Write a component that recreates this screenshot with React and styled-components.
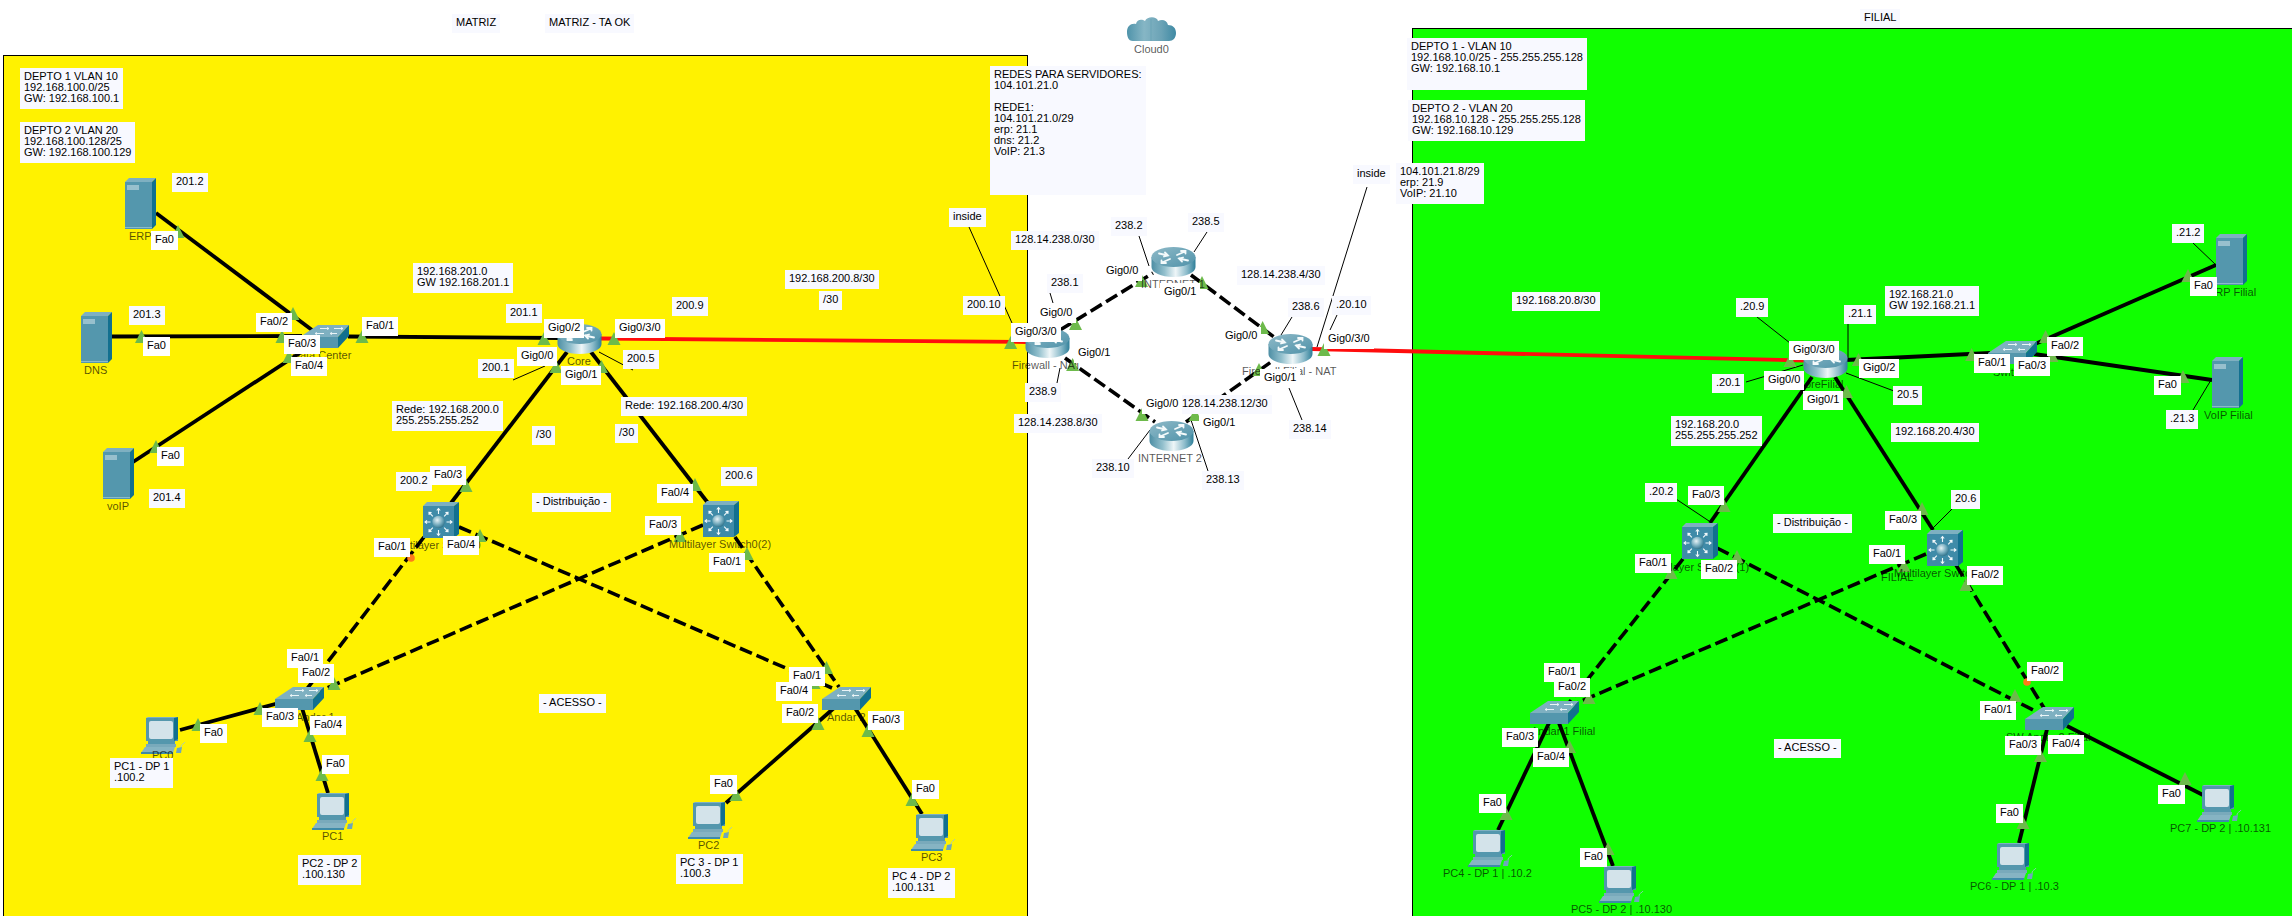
import React from "react";
import styled, { createGlobalStyle } from "styled-components";

const Global = createGlobalStyle`
  html, body { margin: 0; padding: 0; background: #fff; }
  body { overflow: hidden; }
`;

const Canvas = styled.div`
  position: relative;
  width: 2292px;
  height: 916px;
  overflow: hidden;
  background: #fff;
  font-family: "Liberation Sans", Arial, sans-serif;
  font-size: 11px;
  line-height: 11px;
`;

const Site = styled.div`
  position: absolute;
  left: ${(p) => p.$left}px;
  top: ${(p) => p.$top}px;
  width: ${(p) => p.$width}px;
  bottom: -4px;
  box-sizing: border-box;
  background: ${(p) => p.$color};
  border: 1px solid #000;
`;

const WireLayer = styled.svg`
  position: absolute;
  left: 0;
  top: 0;
  width: 2292px;
  height: 916px;
`;

const DeviceBox = styled.svg`
  position: absolute;
  left: ${(p) => p.$x}px;
  top: ${(p) => p.$y}px;
  overflow: visible;
`;

const DeviceName = styled.span`
  position: absolute;
  left: ${(p) => p.$x}px;
  top: ${(p) => p.$cy - 6}px;
  white-space: pre;
  color: rgba(0, 0, 0, 0.68);
`;

const Tag = styled.div`
  position: absolute;
  left: ${(p) => p.$x}px;
  top: ${(p) => p.$y}px;
  padding: 3px 4px 5px;
  min-height: ${(p) => p.$h || 0}px;
  box-sizing: ${(p) => (p.$h ? "border-box" : "content-box")};
  min-width: ${(p) => p.$w || 0}px;
  white-space: pre;
  color: #000;
  background: ${(p) => (p.$note ? "#f8f9ff" : "#fff")};
`;

const TEAL = "#5497ad";
const TEAL_TOP = "#7eb0c1";
const TEAL_SIDE = "#12708f";

const Shared = () => (
  <svg width="0" height="0" style={{ position: "absolute" }}>
    <defs>
      <linearGradient id="rbody" x1="0" x2="1" y1="0" y2="0">
        <stop offset="0" stopColor="#4d8ea4" />
        <stop offset="0.3" stopColor="#93c0cd" />
        <stop offset="0.55" stopColor="#eef6f8" />
        <stop offset="0.8" stopColor="#8dbccb" />
        <stop offset="1" stopColor="#2f7f99" />
      </linearGradient>
      <linearGradient id="rtop" x1="0" x2="1" y1="0" y2="1">
        <stop offset="0" stopColor="#8fbac8" />
        <stop offset="1" stopColor="#4f92a9" />
      </linearGradient>
      <radialGradient id="ball" cx="0.4" cy="0.35" r="0.7">
        <stop offset="0" stopColor="#e6f2f5" />
        <stop offset="0.6" stopColor="#6ea7ba" />
        <stop offset="1" stopColor="#2a6d85" />
      </radialGradient>
      <linearGradient id="cloud" x1="0" x2="1" y1="0" y2="0">
        <stop offset="0" stopColor="#4f93aa" />
        <stop offset="0.35" stopColor="#86b6c5" />
        <stop offset="0.7" stopColor="#6ba3b6" />
        <stop offset="1" stopColor="#3f8aa4" />
      </linearGradient>
    </defs>
  </svg>
);

const Server = ({ x, y }) => (
  <DeviceBox $x={x} $y={y} width="31" height="51" viewBox="0 0 31 51">
    <polygon points="0,4 27,4 27,51 0,51" fill={TEAL} />
    <polygon points="0,4 4,0 31,0 27,4" fill={TEAL_TOP} />
    <polygon points="27,4 31,0 31,47 27,51" fill={TEAL_SIDE} />
    <rect x="2" y="7" width="12" height="5" fill="#97c0cd" />
    <rect x="0" y="49" width="27" height="1" fill="#8cbac9" />
  </DeviceBox>
);

const Switch = ({ x, y }) => (
  <DeviceBox $x={x} $y={y} width="49" height="23" viewBox="0 0 49 23">
    <polygon points="18,0 49,0 38,12 0,12" fill={TEAL_TOP} />
    <polygon points="0,12 38,12 38,23 0,23" fill={TEAL} />
    <polygon points="38,12 49,0 49,11 38,23" fill={TEAL_SIDE} />
    <g stroke="#eaf4f7" strokeWidth="1" fill="none">
      <path d="M20 3.5h9M27 2.5l2 1-2 1" />
      <path d="M34 3.5h9M41 2.5l2 1-2 1" />
      <path d="M15 8.5h9M17 7.5l-2 1 2 1" />
      <path d="M30 8.5h7M32 7.5l-2 1 2 1" />
    </g>
  </DeviceBox>
);

const Router = ({ x, y }) => (
  <DeviceBox $x={x} $y={y} width="45" height="30" viewBox="0 0 45 30">
    <path d="M0.5 10V20C0.5 25.5 10 30 22.5 30S44.5 25.5 44.5 20V10Z" fill="url(#rbody)" />
    <ellipse cx="22.5" cy="10" rx="22" ry="10" fill="url(#rtop)" />
    <g stroke="#f4fafb" strokeWidth="1.8" fill="none" strokeLinecap="round">
      <path d="M8 6.5l9 2M14 5.5l3 3-4 1" />
      <path d="M37 13.5l-9-2M31 14.5l-3-3 4-1" />
      <path d="M26 8l8-3.5M30 4h4.5v2.5" />
      <path d="M19 12l-8 3.5M15 16h-4.5v-2.5" />
    </g>
  </DeviceBox>
);

const MLSwitch = ({ x, y }) => {
  const rays = [0, 45, 90, 135, 180, 225, 270, 315];
  return (
    <DeviceBox $x={x} $y={y} width="36" height="36" viewBox="0 0 36 36">
      <polygon points="0,4 31,4 31,36 0,36" fill="#3f8ba8" />
      <polygon points="0,4 4,0 36,0 31,4" fill={TEAL_TOP} />
      <polygon points="31,4 36,0 36,32 31,36" fill={TEAL_SIDE} />
      <g transform="translate(15.5 20)">
        {rays.map((r) => (
          <g key={r} transform={`rotate(${r})`} stroke="#f2f9fb" strokeWidth="1.1" fill="none">
            <path d="M8 0H13.5M11.5 -1.7L13.5 0L11.5 1.7" />
          </g>
        ))}
        <circle r="6.2" fill="url(#ball)" />
      </g>
    </DeviceBox>
  );
};

const PC = ({ x, y }) => (
  <DeviceBox $x={x} $y={y} width="44" height="37" viewBox="0 0 44 37">
    <polygon points="5,1 37,1 37,24 5,24" fill={TEAL} />
    <polygon points="5,1 7,0 37,0 35,1" fill={TEAL_TOP} />
    <polygon points="33,1 37,0 37,22 33,24" fill={TEAL_SIDE} />
    <rect x="8" y="4" width="24" height="18" rx="2" fill="#d3e3ea" />
    <rect x="7" y="24" width="27" height="3" fill={TEAL} />
    <rect x="5" y="27" width="30" height="3" fill="#79aabb" />
    <polygon points="4,30 34,30 32,36 0,36" fill="#86b4c3" />
    <rect x="0" y="35" width="32" height="2" fill="#3f8ba8" />
    <polygon points="36,31 41,30 40,36 35,36" fill="#6ea7ba" />
    <path d="M40 30c0-3 3-3 4-5" stroke="#9cc4d0" strokeWidth="0.8" fill="none" />
  </DeviceBox>
);

const Cloud = ({ x, y }) => (
  <DeviceBox $x={x} $y={y} width="49" height="26" viewBox="0 0 49 26">
    <path
      d="M6 25C1 25 0 20 0 16C0 10 4 7 9 8C10 3 15 3 18 5C20 0 30 0 31 5C35 3 40 4 41 9C46 9 49 12 49 17C49 22 46 25 42 25Z"
      fill="url(#cloud)"
    />
    <path d="M24 3V25" stroke="#5c9bb0" strokeWidth="1" opacity="0.5" />
  </DeviceBox>
);

/* links: [x1,y1,x2,y2] */
const solid = [
  [156, 213, 312, 330], [112, 336.5, 302, 336], [133, 462, 312, 345], [348, 336.5, 560, 338],
  [567, 352, 451, 503], [591, 352, 708, 503],
  [180, 730, 290, 700], [302, 708, 328, 793], [834, 708, 726, 803], [855, 708, 922, 814],
  [1846, 360, 1990, 353], [2035, 344, 2216, 265], [2034, 354, 2212, 380],
  [1812, 377, 1710, 523], [1835, 377, 1933, 530],
  [1549, 723, 1498, 830], [1559, 723, 1613, 866], [2047, 729, 2019, 843], [2067, 726, 2203, 795],
];
const dashed = [
  [1060, 330, 1153, 273], [1191, 275, 1274, 337], [1065, 358, 1155, 422], [1186, 422, 1271, 362],
  [424, 537, 306, 690], [459, 527, 832, 688], [703, 525, 320, 691], [735, 537, 839, 687],
  [1683, 559, 1568, 704], [1717, 548, 2037, 712], [1926, 554, 1565, 708], [1956, 565, 2044, 708],
];
const red = [
  [600, 338.5, 1026, 342], [1312, 349, 1804, 360.5],
];
const thin = [
  [969, 227, 1012, 323], [1139, 236, 1149, 266], [1207, 232, 1194, 252], [1050, 293, 1053, 303],
  [1367, 187, 1317, 347], [1292, 317, 1281, 335], [1337, 315, 1330, 330], [1060, 368, 1057, 383],
  [1289, 388, 1302, 420], [1128, 459, 1150, 430], [1208, 471, 1191, 420],
  [599, 352, 633, 370], [513, 380, 545, 366],
  [1757, 317, 1790, 343], [1848, 323, 1848, 360], [2193, 243, 2216, 265], [2193, 410, 2211, 380],
  [1746, 382, 1803, 365], [1894, 391, 1846, 373], [1676, 499, 1712, 523], [1952, 509, 1933, 528],
];
/* link lights: centre x, base y */
const lights = [
  [178, 238], [293, 320], [282, 343], [289, 363], [362, 343], [141.5, 343], [544, 345], [614, 345],
  [556, 373], [601.5, 373], [156, 453], [466, 492], [695, 491], [480, 542], [680, 542], [747, 560],
  [334, 690], [260, 715], [310, 742], [198, 731], [322, 781], [826.5, 674], [814, 689], [818, 730],
  [868, 737], [736, 801], [912, 806], [1141.5, 287], [1202, 289], [1075.5, 330], [1010.6, 349],
  [1072.6, 371], [1262.6, 334], [1324, 356], [1259, 376], [1142, 421], [1195, 421],
  [1790, 367], [1858.5, 366], [1846.5, 398], [1971.6, 361], [2045.6, 343], [2052, 362], [2188, 282],
  [2183, 383], [1724, 512], [1922, 515], [1737, 563], [1671, 579], [1904, 572], [1966, 591],
  [1589, 704], [2015, 702], [1569.5, 753], [2040.5, 762], [1506, 820], [1608, 855], [2023, 829], [2185, 785],
];
const dots = [[411, 558], [2027, 682]];

const Line = ({ l, ...rest }) => <line x1={l[0]} y1={l[1]} x2={l[2]} y2={l[3]} {...rest} />;

const names = [
  ["ERP", 129, 237], ["DNS", 84, 371], ["voIP", 107, 507], ["Data Center", 292, 356], ["Core", 567, 362],
  ["Multilayer Switch0", 392, 546], ["Multilayer Switch0(2)", 669, 545], ["Andar 1", 296, 718], ["Andar 2", 827, 718],
  ["PC0", 152, 756], ["PC1", 322, 837], ["PC2", 698, 846], ["PC3", 921, 858], ["Cloud0", 1134, 50],
  ["INTERNET 1", 1141, 285], ["Firewall - NAT", 1012, 366], ["INTERNET 2", 1138, 459],
  ["Firewall Filial - NAT", 1242, 372], ["CoreFilial", 1797, 385], ["Switch", 1993, 373],
  ["ERP Filial", 2208, 293], ["VoIP Filial", 2204, 416], ["Multilayer Switch0(1)", 1647, 568],
  ["Multilayer Switch0(3)", 1894, 574], ["FILIAL", 1881, 578], ["Andar 1 Filial", 1531, 732],
  ["SW Andar 2 Filial", 2006, 738], ["PC4 - DP 1 | .10.2", 1443, 874], ["PC5 - DP 2 | .10.130", 1571, 910],
  ["PC6 - DP 1 | .10.3", 1970, 887], ["PC7 - DP 2 | .10.131", 2170, 829],
];

const ports = [
  ["Fa0", 151, 231], ["Fa0", 143, 337], ["Fa0/2", 256, 313], ["Fa0/3", 284, 335], ["Fa0/4", 291, 357], ["Fa0/1", 362, 317],
  ["Gig0/2", 544, 319], ["Gig0/3/0", 615, 319], ["Gig0/0", 517, 347], ["Gig0/1", 561, 366], ["Fa0", 157, 447],
  ["Fa0/3", 430, 466], ["Fa0/4", 657, 484], ["Fa0/3", 645, 516], ["Fa0/1", 374, 538], ["Fa0/4", 443, 536], ["Fa0/1", 709, 553],
  ["Fa0/1", 287, 649], ["Fa0/2", 298, 664], ["Fa0/1", 789, 667], ["Fa0/4", 776, 682], ["Fa0/2", 782, 704], ["Fa0/3", 868, 711],
  ["Fa0/3", 262, 708], ["Fa0/4", 310, 716], ["Fa0", 200, 724], ["Fa0", 322, 755], ["Fa0", 710, 775], ["Fa0", 912, 780],
  ["Gig0/0", 1102, 262], ["Gig0/1", 1160, 283], ["Gig0/0", 1036, 304], ["Gig0/3/0", 1011, 323], ["Gig0/1", 1074, 344],
  ["Gig0/0", 1142, 395], ["Gig0/1", 1199, 414], ["Gig0/0", 1221, 327], ["Gig0/3/0", 1324, 330], ["Gig0/1", 1260, 369],
  ["Gig0/3/0", 1789, 341], ["Gig0/2", 1859, 359], ["Fa0/1", 1974, 354], ["Fa0/3", 2014, 357], ["Fa0/2", 2047, 337],
  ["Fa0", 2190, 277], ["Fa0", 2154, 376], ["Gig0/0", 1764, 371], ["Gig0/1", 1803, 391],
  ["Fa0/3", 1688, 486], ["Fa0/3", 1885, 511], ["Fa0/1", 1869, 545], ["Fa0/1", 1635, 554], ["Fa0/2", 1701, 560], ["Fa0/2", 1967, 566],
  ["Fa0/1", 1544, 663], ["Fa0/2", 1554, 678], ["Fa0/2", 2027, 662], ["Fa0/1", 1980, 701], ["Fa0/3", 1502, 728], ["Fa0/4", 1533, 748],
  ["Fa0/3", 2005, 736], ["Fa0/4", 2048, 735], ["Fa0", 1479, 794], ["Fa0", 1580, 848], ["Fa0", 1996, 804], ["Fa0", 2158, 785],
];

const notes = [
  ["MATRIZ", 452, 14], ["MATRIZ - TA OK", 545, 14],
  ["DEPTO 1 VLAN 10\n192.168.100.0/25\nGW: 192.168.100.1", 20, 68],
  ["DEPTO 2 VLAN 20\n192.168.100.128/25\nGW: 192.168.100.129", 20, 122],
  ["201.2", 172, 173], ["201.3", 129, 306], ["192.168.201.0\nGW 192.168.201.1", 413, 263], ["201.1", 506, 304], ["200.9", 672, 297],
  ["200.5", 623, 350], ["200.1", 478, 359], ["Rede: 192.168.200.0\n255.255.255.252", 392, 401], ["Rede: 192.168.200.4/30", 621, 397],
  ["/30", 532, 426], ["/30", 615, 424], ["201.4", 149, 489], ["200.2", 396, 472], ["200.6", 721, 467], ["- Distribuição -", 532, 493],
  ["- ACESSO -", 539, 694], ["PC1 - DP 1\n.100.2", 110, 758], ["PC2 - DP 2\n.100.130", 298, 855], ["PC 3 - DP 1\n.100.3", 676, 854],
  ["PC 4 - DP 2\n.100.131", 888, 868],
  ["REDES PARA SERVIDORES:\n104.101.21.0\n\nREDE1:\n104.101.21.0/29\nerp: 21.1\ndns: 21.2\nVoIP: 21.3", 990, 66, 156, 129],
  ["inside", 949, 208], ["128.14.238.0/30", 1011, 231], ["238.2", 1111, 217], ["238.5", 1188, 213], ["128.14.238.4/30", 1237, 266],
  ["238.1", 1047, 274], ["192.168.200.8/30", 785, 270], ["/30", 819, 291], ["200.10", 963, 296], ["238.9", 1025, 383],
  ["128.14.238.8/30", 1014, 414], ["128.14.238.12/30", 1178, 395], ["238.10", 1092, 459], ["238.13", 1202, 471], ["238.14", 1289, 420],
  ["238.6", 1288, 298], [".20.10", 1332, 296], ["inside", 1353, 165], ["104.101.21.8/29\nerp: 21.9\nVoIP: 21.10", 1396, 163],
  ["FILIAL", 1860, 9],
  ["DEPTO 1 - VLAN 10\n192.168.10.0/25 - 255.255.255.128\nGW: 192.168.10.1", 1407, 38, 180, 52],
  ["DEPTO 2 - VLAN 20\n192.168.10.128 - 255.255.255.128\nGW: 192.168.10.129", 1408, 100, 176, 41],
  ["192.168.20.8/30", 1512, 292], ["192.168.21.0\nGW 192.168.21.1", 1885, 286], [".21.1", 1844, 305], [".20.9", 1736, 298],
  [".21.2", 2172, 224], [".21.3", 2166, 410], [".20.1", 1712, 374], ["20.5", 1893, 386], ["192.168.20.0\n255.255.255.252", 1671, 416],
  ["192.168.20.4/30", 1891, 423], [".20.2", 1645, 483], ["- Distribuição -", 1773, 514], ["20.6", 1951, 490], ["- ACESSO -", 1774, 739],
];

export default function App() {
  return (
    <Canvas>
      <Global />
      <Shared />
      <Site $left={3} $top={55} $width={1025} $color="#fff200" />
      <Site $left={1412} $top={28} $width={890} $color="#10ff00" />

      <WireLayer viewBox="0 0 2292 916">
        {thin.map((l, i) => <Line key={i} l={l} stroke="#000" strokeWidth="1" />)}
        {solid.map((l, i) => <Line key={i} l={l} stroke="#000" strokeWidth="3.8" />)}
        {dashed.map((l, i) => <Line key={i} l={l} stroke="#000" strokeWidth="3.6" strokeDasharray="13 5" />)}
        {red.map((l, i) => <Line key={i} l={l} stroke="#ff0d0d" strokeWidth="3.8" />)}
      </WireLayer>

      <Server x={125} y={178} /><Server x={81} y={312} /><Server x={103} y={448} />
      <Server x={2216} y={234} /><Server x={2212} y={357} />
      <Switch x={300} y={325} /><Switch x={275} y={687} /><Switch x={822} y={687} />
      <Switch x={1988} y={341} /><Switch x={1530} y={701} /><Switch x={2025} y={707} />
      <Router x={557} y={324} /><Router x={1151} y={247} /><Router x={1025} y={328} />
      <Router x={1268} y={334} /><Router x={1149} y={421} /><Router x={1803} y={348} />
      <MLSwitch x={423} y={502} /><MLSwitch x={703} y={501} /><MLSwitch x={1682} y={523} /><MLSwitch x={1927} y={530} />
      <PC x={141} y={717} /><PC x={312} y={793} /><PC x={688} y={802} /><PC x={911} y={814} />
      <PC x={1468} y={830} /><PC x={1599} y={866} /><PC x={1992} y={843} /><PC x={2197} y={785} />
      <Cloud x={1127} y={16} />

      <WireLayer viewBox="0 0 2292 916">
        {lights.map(([x, y], i) => (
          <polygon key={i} points={`${x - 6.5},${y} ${x + 6.5},${y} ${x},${y - 13}`} fill="#6dba4b" />
        ))}
        {dots.map(([x, y], i) => <circle key={i} cx={x} cy={y} r="3.8" fill="#ff7a1a" />)}
      </WireLayer>

      {names.map(([t, x, cy], i) => <DeviceName key={i} $x={x} $cy={cy}>{t}</DeviceName>)}
      {notes.map(([t, x, y, w, h], i) => <Tag key={i} $note $x={x} $y={y} $w={w ? w - 8 : 0} $h={h}>{t}</Tag>)}
      {ports.map(([t, x, y], i) => <Tag key={i} $x={x} $y={y}>{t}</Tag>)}
    </Canvas>
  );
}
